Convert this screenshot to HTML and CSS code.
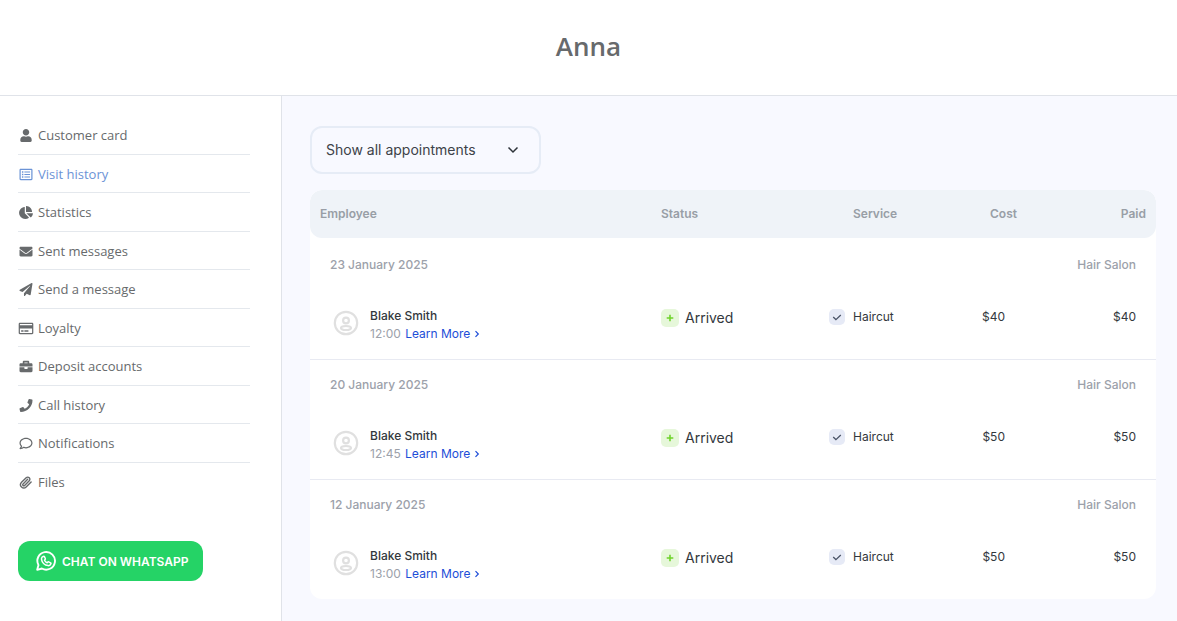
FILE: index.html
```
<!DOCTYPE html>
<html lang="en">
  <head>
    <meta charset="UTF-8" />
    <meta name="viewport" content="width=device-width, initial-scale=1.0" />
    <title>Anna - Visit history</title>
    <link rel="stylesheet" href="styles.css">
  </head>
  <body>
    <!-- Shared icons -->
    <svg class="sprite" aria-hidden="true">
      <symbol id="icon-avatar" viewBox="0 0 26 26">
        <g fill="none" stroke="#e0e0e0" stroke-width="2.2">
          <circle cx="13" cy="13" r="11.2" />
          <circle cx="13" cy="10.5" r="2.9" />
          <ellipse cx="13" cy="18" rx="5" ry="2" />
        </g>
      </symbol>
      <symbol id="icon-plus" viewBox="0 0 18 18">
        <path d="M9 5.7v6.6M5.7 9h6.6" fill="none" stroke="#6fd32b" stroke-width="1.6" />
      </symbol>
      <symbol id="icon-check" viewBox="0 0 16 16">
        <path d="M4.2 8.1l2.7 2.5 4.9-4.6" fill="none" stroke="#4b5568" stroke-width="1.3" />
      </symbol>
      <symbol id="icon-chevron" viewBox="0 0 6 8">
        <path d="M1.5 1.2L4.3 4 1.5 6.8" fill="none" stroke="#1d4ed8" stroke-width="1.2" />
      </symbol>
    </svg>

    <header class="page-header">
      <h1>Anna</h1>
    </header>

    <div class="layout">
      <aside class="sidebar">
        <nav>
          <ul class="menu">
            <li><a href="#">
              <svg class="icon" viewBox="0 0 448 512"><path d="M224 256c70.7 0 128-57.3 128-128S294.7 0 224 0 96 57.3 96 128s57.3 128 128 128zm89.6 32h-16.7c-22.2 10.2-46.9 16-72.9 16s-50.6-5.8-72.9-16h-16.7C60.2 288 0 348.2 0 422.4V464c0 26.5 21.5 48 48 48h352c26.5 0 48-21.5 48-48v-41.6c0-74.2-60.2-134.4-134.4-134.4z"/></svg>
              Customer card
            </a></li>
            <li class="active"><a href="#">
              <svg class="icon" viewBox="0 0 512 512"><path fill-rule="evenodd" d="M48 32h416c26.5 0 48 21.5 48 48v352c0 26.5-21.5 48-48 48H48c-26.5 0-48-21.5-48-48V80c0-26.5 21.5-48 48-48zm0 48v352h416V80zM96 128h56v56H96zM96 228h56v56H96zM96 328h56v56H96zM192 136h224v40H192zM192 236h224v40H192zM192 336h224v40H192z"/></svg>
              Visit history
            </a></li>
            <li><a href="#">
              <svg class="icon" viewBox="0 0 544 512"><path d="M527.79 288H290.5l158.03 158.03c6.04 6.04 15.98 6.53 22.19.68 38.7-36.46 65.32-85.61 73.13-140.86 1.34-9.46-6.51-17.85-16.06-17.85zm-15.83-64.8C503.72 103.74 408.26 8.28 288.8.04 279.68-.59 272 7.1 272 16.24V240h223.77c9.14 0 16.82-7.68 16.19-16.8zM224 288V50.71c0-9.55-8.39-17.4-17.84-16.06C86.99 51.49-4.1 155.6.14 280.37 4.5 408.51 114.83 513.59 243.03 511.98c50.4-.63 96.97-16.87 135.26-44.03 7.9-5.6 8.42-17.23 1.57-24.08L224 288z"/></svg>
              Statistics
            </a></li>
            <li><a href="#">
              <svg class="icon" viewBox="0 0 512 512"><path d="M502.3 190.8c3.9-3.1 9.7-.2 9.7 4.7V400c0 26.5-21.5 48-48 48H48c-26.5 0-48-21.5-48-48V195.6c0-5 5.7-7.8 9.7-4.7 22.4 17.4 52.1 39.5 154.1 113.6 21.1 15.4 56.7 47.8 92.2 47.6 35.7.3 72-32.8 92.3-47.6 102-74.1 131.6-96.3 154-113.7zM256 320c23.2.4 56.6-29.2 73.4-41.4 132.7-96.3 142.8-104.7 173.4-128.7 5.8-4.5 9.2-11.5 9.2-18.9v-19c0-26.5-21.5-48-48-48H48c-26.5 0-48 21.5-48 48v19c0 7.4 3.4 14.3 9.2 18.9 30.6 23.9 40.7 32.4 173.4 128.7 16.8 12.2 50.2 41.8 73.4 41.4z"/></svg>
              Sent messages
            </a></li>
            <li><a href="#">
              <svg class="icon" viewBox="0 0 512 512"><path d="M476 3.2L12.5 270.6c-18.1 10.4-15.8 35.6 2.2 43.2L121 358.4l287.3-253.2c5.5-4.9 13.3 2.6 8.6 8.3L176 407v80.5c0 23.6 28.5 32.9 42.5 15.8L282 426l124.6 52.2c14.2 6 30.4-2.9 33-18.2l72-432C515 7.8 493.3-6.8 476 3.2z"/></svg>
              Send a message
            </a></li>
            <li><a href="#">
              <svg class="icon" viewBox="0 0 576 512"><path d="M527.9 32H48.1C21.5 32 0 53.5 0 80v352c0 26.5 21.5 48 48.1 48h479.8c26.6 0 48.1-21.5 48.1-48V80c0-26.5-21.5-48-48.1-48zM54.1 80h467.8c3.3 0 6 2.7 6 6v42H48.1V86c0-3.3 2.7-6 6-6zm467.8 352H54.1c-3.3 0-6-2.7-6-6V256h479.8v170c0 3.3-2.7 6-6 6zM192 332v40c0 6.6-5.4 12-12 12h-72c-6.6 0-12-5.4-12-12v-40c0-6.6 5.4-12 12-12h72c6.6 0 12 5.4 12 12zm192 0v40c0 6.6-5.4 12-12 12H236c-6.6 0-12-5.4-12-12v-40c0-6.6 5.4-12 12-12h136c6.6 0 12 5.4 12 12z"/></svg>
              Loyalty
            </a></li>
            <li><a href="#">
              <svg class="icon" viewBox="0 0 512 512"><path d="M320 336c0 8.84-7.16 16-16 16h-96c-8.84 0-16-7.16-16-16v-48H0v144c0 25.6 22.4 48 48 48h416c25.6 0 48-22.4 48-48V288H320v48zm144-208h-80V80c0-25.6-22.4-48-48-48H176c-25.6 0-48 22.4-48 48v48H48c-25.6 0-48 22.4-48 48v80h512v-80c0-25.6-22.4-48-48-48zm-144 0H192V96h128v32z"/></svg>
              Deposit accounts
            </a></li>
            <li><a href="#">
              <svg class="icon" viewBox="0 0 512 512"><path d="M493.4 24.6l-104-24c-11.3-2.6-22.9 3.3-27.5 13.9l-48 112c-4.2 9.8-1.4 21.3 6.9 28l60.6 49.6c-36 76.7-98.9 140.5-177.2 177.2l-49.6-60.6c-6.8-8.3-18.2-11.1-28-6.9l-112 48C3.9 366.5-2 378.1.6 389.4l24 104C27.1 504.2 36.7 512 48 512c256.1 0 464-207.5 464-464 0-11.2-7.7-20.9-18.6-23.4z"/></svg>
              Call history
            </a></li>
            <li><a href="#">
              <svg class="icon" viewBox="0 0 512 512"><path d="M256 32C114.6 32 0 125.1 0 240c0 47.6 19.9 91.2 52.9 126.3C38 405.7 7 439.1 6.5 439.5c-6.6 7-8.4 17.2-4.6 26S14.4 480 24 480c61.5 0 110-25.7 139.1-46.3C192 442.8 223.2 448 256 448c141.4 0 256-93.1 256-208S397.4 32 256 32zm0 368c-26.7 0-53.1-4.1-78.4-12.1l-22.7-7.2-19.5 13.8c-14.3 10.1-33.9 21.4-57.5 29 7.3-12.1 14.4-25.7 19.9-40.2l10.6-28.1-20.6-21.8C69.7 314.1 48 282.2 48 240c0-88.2 93.3-160 208-160s208 71.8 208 160-93.3 160-208 160z"/></svg>
              Notifications
            </a></li>
            <li><a href="#">
              <svg class="icon icon-line" viewBox="0 0 24 24"><path d="M21.44 11.05l-9.19 9.19a6 6 0 0 1-8.49-8.49l8.57-8.57A4 4 0 1 1 18 8.84l-8.59 8.57a2 2 0 0 1-2.83-2.83l8.49-8.48"/></svg>
              Files
            </a></li>
          </ul>
        </nav>

        <a class="whatsapp" href="#">
          <svg viewBox="0 0 20 20" fill="none" stroke="#fff" stroke-linejoin="round">
            <path d="M1.2 18.8l1.3-4.7a8.8 8.8 0 1 1 3.4 3.4z" stroke-width="1.9" />
            <path d="M6.1 6.2l1.3-.9c.4-.2.8-.1 1 .3l.9 1.9c.2.4.1.7-.2 1l-.6.7c.5 1.2 1.4 2.1 2.6 2.6l.7-.7c.3-.3.7-.4 1-.2l1.8.9c.4.2.5.6.3 1-.4 1.2-1.5 2-2.8 1.8-3.5-.5-6.3-3.3-6.6-6.5 0-.8.1-1.4.6-1.9z" stroke-width="1.5" />
          </svg>
          CHAT ON WHATSAPP
        </a>
      </aside>

      <main class="content">
        <div class="filter">
          <select aria-label="Appointments filter">
            <option>Show all appointments</option>
          </select>
          <svg class="filter-arrow" viewBox="0 0 12 8"><path d="M1.5 1.5L6 6l4.5-4.5" fill="none" stroke="#2d3339" stroke-width="1.5" /></svg>
        </div>

        <table class="visits">
          <colgroup>
            <col>
            <col class="col-status">
            <col class="col-service">
            <col class="col-cost">
            <col class="col-paid">
          </colgroup>
          <thead>
            <tr>
              <th>Employee</th>
              <th>Status</th>
              <th class="service">Service</th>
              <th class="cost">Cost</th>
              <th class="paid">Paid</th>
            </tr>
          </thead>
          <tbody>
            <tr class="visit-date">
              <td colspan="2">23 January 2025</td>
              <td colspan="3" class="salon">Hair Salon</td>
            </tr>
            <tr class="visit">
              <td class="employee">
                <div class="person">
                  <svg class="avatar"><use href="#icon-avatar" /></svg>
                  <div>
                    <div class="name">Blake Smith</div>
                    <div class="time">12:00 <a href="#">Learn More <svg class="chevron"><use href="#icon-chevron" /></svg></a></div>
                  </div>
                </div>
              </td>
              <td><div class="status"><svg><use href="#icon-plus" /></svg>Arrived</div></td>
              <td><div class="service-name"><svg><use href="#icon-check" /></svg>Haircut</div></td>
              <td class="cost">$40</td>
              <td class="paid">$40</td>
            </tr>
          </tbody>
          <tbody>
            <tr class="visit-date">
              <td colspan="2">20 January 2025</td>
              <td colspan="3" class="salon">Hair Salon</td>
            </tr>
            <tr class="visit">
              <td class="employee">
                <div class="person">
                  <svg class="avatar"><use href="#icon-avatar" /></svg>
                  <div>
                    <div class="name">Blake Smith</div>
                    <div class="time">12:45 <a href="#">Learn More <svg class="chevron"><use href="#icon-chevron" /></svg></a></div>
                  </div>
                </div>
              </td>
              <td><div class="status"><svg><use href="#icon-plus" /></svg>Arrived</div></td>
              <td><div class="service-name"><svg><use href="#icon-check" /></svg>Haircut</div></td>
              <td class="cost">$50</td>
              <td class="paid">$50</td>
            </tr>
          </tbody>
          <tbody>
            <tr class="visit-date">
              <td colspan="2">12 January 2025</td>
              <td colspan="3" class="salon">Hair Salon</td>
            </tr>
            <tr class="visit">
              <td class="employee">
                <div class="person">
                  <svg class="avatar"><use href="#icon-avatar" /></svg>
                  <div>
                    <div class="name">Blake Smith</div>
                    <div class="time">13:00 <a href="#">Learn More <svg class="chevron"><use href="#icon-chevron" /></svg></a></div>
                  </div>
                </div>
              </td>
              <td><div class="status"><svg><use href="#icon-plus" /></svg>Arrived</div></td>
              <td><div class="service-name"><svg><use href="#icon-check" /></svg>Haircut</div></td>
              <td class="cost">$50</td>
              <td class="paid">$50</td>
            </tr>
          </tbody>
        </table>
      </main>
    </div>
  </body>
</html>
```
FILE: styles.css
```
* {
  box-sizing: border-box;
}
body {
  margin: 0;
  min-height: 100vh;
  display: flex;
  flex-direction: column;
  font-family: "Open Sans", sans-serif;
  font-size: 13px;
  color: #676a6c;
  background-color: #fff;
}
a {
  color: inherit;
  text-decoration: none;
}
.sprite {
  display: none;
}
.page-header {
  padding: 28px 20px 31px;
  border-bottom: 1px solid #e0e3e9;
  text-align: center;
}
.page-header h1 {
  margin: 0;
  font-size: 26px;
  line-height: 36px;
  font-weight: 600;
}
.layout {
  flex: 1;
  display: flex;
}
.sidebar {
  width: 282px;
  flex-shrink: 0;
  padding: 20px 31px 20px 18px;
  border-right: 1px solid #e0e3e9;
}
.menu {
  margin: 0 0 41px;
  padding: 0;
  list-style: none;
}
.menu a {
  display: flex;
  align-items: center;
  gap: 4px;
  padding: 10px 0 8px;
  line-height: 1.5;
  border-bottom: 1px solid #e4e8ed;
}
.menu li:last-child a {
  border-bottom: none;
}
.menu .active {
  color: #6b93d6;
}
.icon {
  width: 16px;
  height: 13px;
  fill: currentColor;
}
.icon-line {
  fill: none;
  stroke: currentColor;
  stroke-width: 2.6;
  stroke-linecap: round;
}
.whatsapp {
  display: inline-flex;
  align-items: center;
  gap: 6px;
  height: 40px;
  padding: 0 15px 0 18px;
  border-radius: 12px;
  background-color: #25d366;
  color: #fff;
  font-family: Inter, sans-serif;
  font-size: 12px;
  font-weight: 600;
  white-space: nowrap;
}
.whatsapp svg {
  width: 20px;
  height: 20px;
}
.content {
  flex: 1;
  padding: 30px 21px 21px 28px;
  background-color: #f8f9ff;
  font-family: Inter, sans-serif;
}
.filter {
  position: relative;
  display: inline-block;
  vertical-align: top;
  margin-bottom: 16px;
}
.filter select {
  appearance: none;
  display: block;
  height: 48px;
  padding: 0 63px 2px 14px;
  border: 2px solid #e6ecf6;
  border-radius: 12px;
  background-color: transparent;
  color: #3d4248;
  font-family: inherit;
  font-size: 14px;
}
.filter-arrow {
  position: absolute;
  top: 20px;
  right: 22px;
  width: 12px;
  height: 8px;
  pointer-events: none;
}
.visits {
  width: 100%;
  table-layout: fixed;
  border-spacing: 0;
  border-radius: 12px;
  background-color: #fff;
  overflow: hidden;
  font-size: 12px;
}
.col-status {
  width: 168px;
}
.col-service {
  width: 108px;
}
.col-cost {
  width: 100px;
}
.col-paid {
  width: 129px;
}
.visits th {
  height: 48px;
  padding: 0 10px 2px;
  background-color: #eff3f8;
  color: #989ea6;
  font-weight: 600;
  text-align: left;
}
.visits th:first-child {
  border-radius: 12px 0 0 12px;
}
.visits th:last-child {
  border-radius: 0 12px 12px 0;
}
.visits th.service {
  padding-left: 34px;
}
.visits th.cost,
.visits th.paid {
  text-align: right;
}
.visit-date td {
  height: 50px;
  padding: 0 20px 2px;
  color: #9ca1aa;
  font-weight: 500;
}
tbody:nth-of-type(1) .visit-date td {
  height: 52px;
  padding-top: 2px;
}
.visit-date .salon {
  text-align: right;
}
.visit td {
  height: 70px;
  padding: 17px 10px 0;
  border-bottom: 1px solid #e8eaf2;
  color: #33383d;
  line-height: 20px;
  vertical-align: top;
}
tbody:last-child .visit td {
  height: 69px;
  border-bottom: none;
}
.visit .employee {
  padding-left: 23px;
}
.visit .cost {
  padding-right: 22px;
  text-align: right;
}
.visit .paid {
  padding-right: 20px;
  text-align: right;
}
.person {
  display: flex;
  gap: 11px;
  line-height: 18px;
}
.avatar {
  width: 26px;
  height: 26px;
  margin-top: 3px;
}
.name {
  font-weight: 500;
}
.time {
  color: #9ca1aa;
}
.time a {
  margin-left: 1px;
  color: #1d4ed8;
}
.chevron {
  width: 6px;
  height: 8px;
}
.status {
  display: flex;
  align-items: center;
  gap: 6px;
  font-size: 14px;
  line-height: 22px;
}
.status svg {
  width: 18px;
  height: 18px;
  border-radius: 5px;
  background-color: #e6f7da;
}
.service-name {
  display: flex;
  align-items: center;
  gap: 8px;
}
.service-name svg {
  width: 16px;
  height: 16px;
  border-radius: 5px;
  background-color: #e6eaf6;
}
```
